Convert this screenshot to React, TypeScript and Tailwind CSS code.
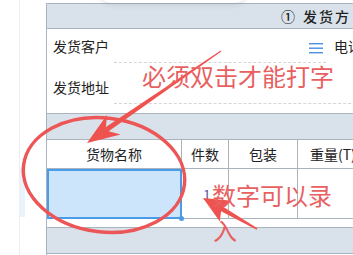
import React from 'react';

const line = 'border-[#a9b4be]';

const App = () => {
  return (
    <div className="relative w-[353px] h-[255px] overflow-hidden bg-white font-['Noto_Sans_CJK_SC',sans-serif] text-[14px] text-[#222]">
      <div className="flex h-full">
        {/* Left gutter */}
        <div className="w-[20px] shrink-0 border-r border-[#eeeeee]" />
        <div className="w-[26px] shrink-0 pt-[167px]">
          <div className="h-[50px] w-[5px] bg-[#eaf2fc]" />
        </div>

        {/* Form panel */}
        <div className={`w-[340px] shrink-0 mt-[3px] border-l ${line} flex flex-col`}>
          {/* Section header */}
          <div className={`h-[26px] bg-[#d9e2ea] border-y ${line} flex items-center pl-[234px] gap-[8px] font-medium whitespace-nowrap`}>
            <span>①</span>
            <span className="tracking-[2px]">发货方</span>
          </div>

          {/* 发货客户 */}
          <div className="h-[34px] flex">
            <div className="w-[67px] shrink-0 pl-[6px] pt-[7px] whitespace-nowrap">发货客户</div>
            <div className="w-[212px] shrink-0 border-b border-dashed border-[#d6d6d6] flex justify-end pr-[3px] pt-[14px]">
              <svg width="14" height="11" viewBox="0 0 14 11">
                <rect x="0" y="0" width="14" height="1.4" fill="#4a90e2" />
                <rect x="0" y="4.5" width="14" height="1.4" fill="#4a90e2" />
                <rect x="0" y="9" width="14" height="1.4" fill="#4a90e2" />
              </svg>
            </div>
            <div className="pl-[8px] pt-[7px] whitespace-nowrap">电话</div>
          </div>

          {/* 发货地址 */}
          <div className="h-[41px] flex">
            <div className="w-[67px] shrink-0 pl-[6px] pt-[14px] whitespace-nowrap">发货地址</div>
            <div className="flex-1 border-b border-dashed border-[#d6d6d6]" />
          </div>
          <div className={`h-[10px] border-b ${line}`} />

          {/* Gray strip */}
          <div className={`h-[26px] bg-[#d9e2ea] border-b ${line}`} />

          {/* Goods table */}
          <div className="grid grid-cols-[135px_47px_69px_89px]">
            <div className={`h-[29px] border-r border-b ${line} flex items-center justify-center`}>货物名称</div>
            <div className={`h-[29px] border-r border-b ${line} flex items-center justify-center`}>件数</div>
            <div className={`h-[29px] border-r border-b ${line} flex items-center justify-center`}>包装</div>
            <div className={`h-[29px] border-b ${line} flex items-center pl-[12px] whitespace-nowrap`}>重量(T)</div>

            <div className="relative h-[50px] bg-[#cde5fb] border-2 border-[#4a9be8]">
              <div className="absolute -right-[4px] -bottom-[4px] w-[5px] h-[5px] rounded-full bg-[#4a9be8]" />
            </div>
            <div className={`h-[50px] border-r border-b ${line} pl-[21px] pt-[15px] text-[#5b5ba8]`}>1</div>
            <div className={`h-[50px] border-r border-b ${line}`} />
            <div className={`h-[50px] border-b ${line}`} />
          </div>

          <div className={`h-[9px] border-b ${line}`} />
          <div className={`h-[26px] bg-[#d9e2ea] border-b ${line}`} />
        </div>
      </div>

      {/* Popup edge at the very top */}
      <div className="absolute left-[98px] top-[-20px] w-[150px] h-[23px] rounded-b-[14px] bg-white shadow-[0_1px_6px_rgba(0,0,0,0.12)]" />

      {/* Red annotations */}
      <svg className="absolute inset-0 pointer-events-none" width="353" height="255" viewBox="0 0 353 255">
        <ellipse cx="104" cy="175" rx="81" ry="57" transform="rotate(7 104 175)" fill="none" stroke="#ec5656" strokeWidth="3.5" />
        <polygon
          points="221.3,51.4 108.7,131.2 120.7,134.5 87,143 107.1,114.7 105.9,127 220.7,50.6"
          fill="#ef5350"
        />
        <polygon
          points="257.4,228.2 223.5,206.9 231.8,200.7 203,198 219.8,221.5 221.1,211.3 256.6,229.8"
          fill="#ef5350"
        />
      </svg>
      <div className="absolute left-[142px] top-[64px] text-[24px] leading-[24px] text-[#e8605f] whitespace-nowrap">必须双击才能打字</div>
      <div className="absolute left-[212px] top-[183px] text-[24px] leading-[24px] text-[#e8605f] whitespace-nowrap">数字可以录</div>
      <div className="absolute left-[213px] top-[218px] text-[24px] leading-[24px] text-[#e8605f] whitespace-nowrap">入</div>
    </div>
  );
};

export default App;
